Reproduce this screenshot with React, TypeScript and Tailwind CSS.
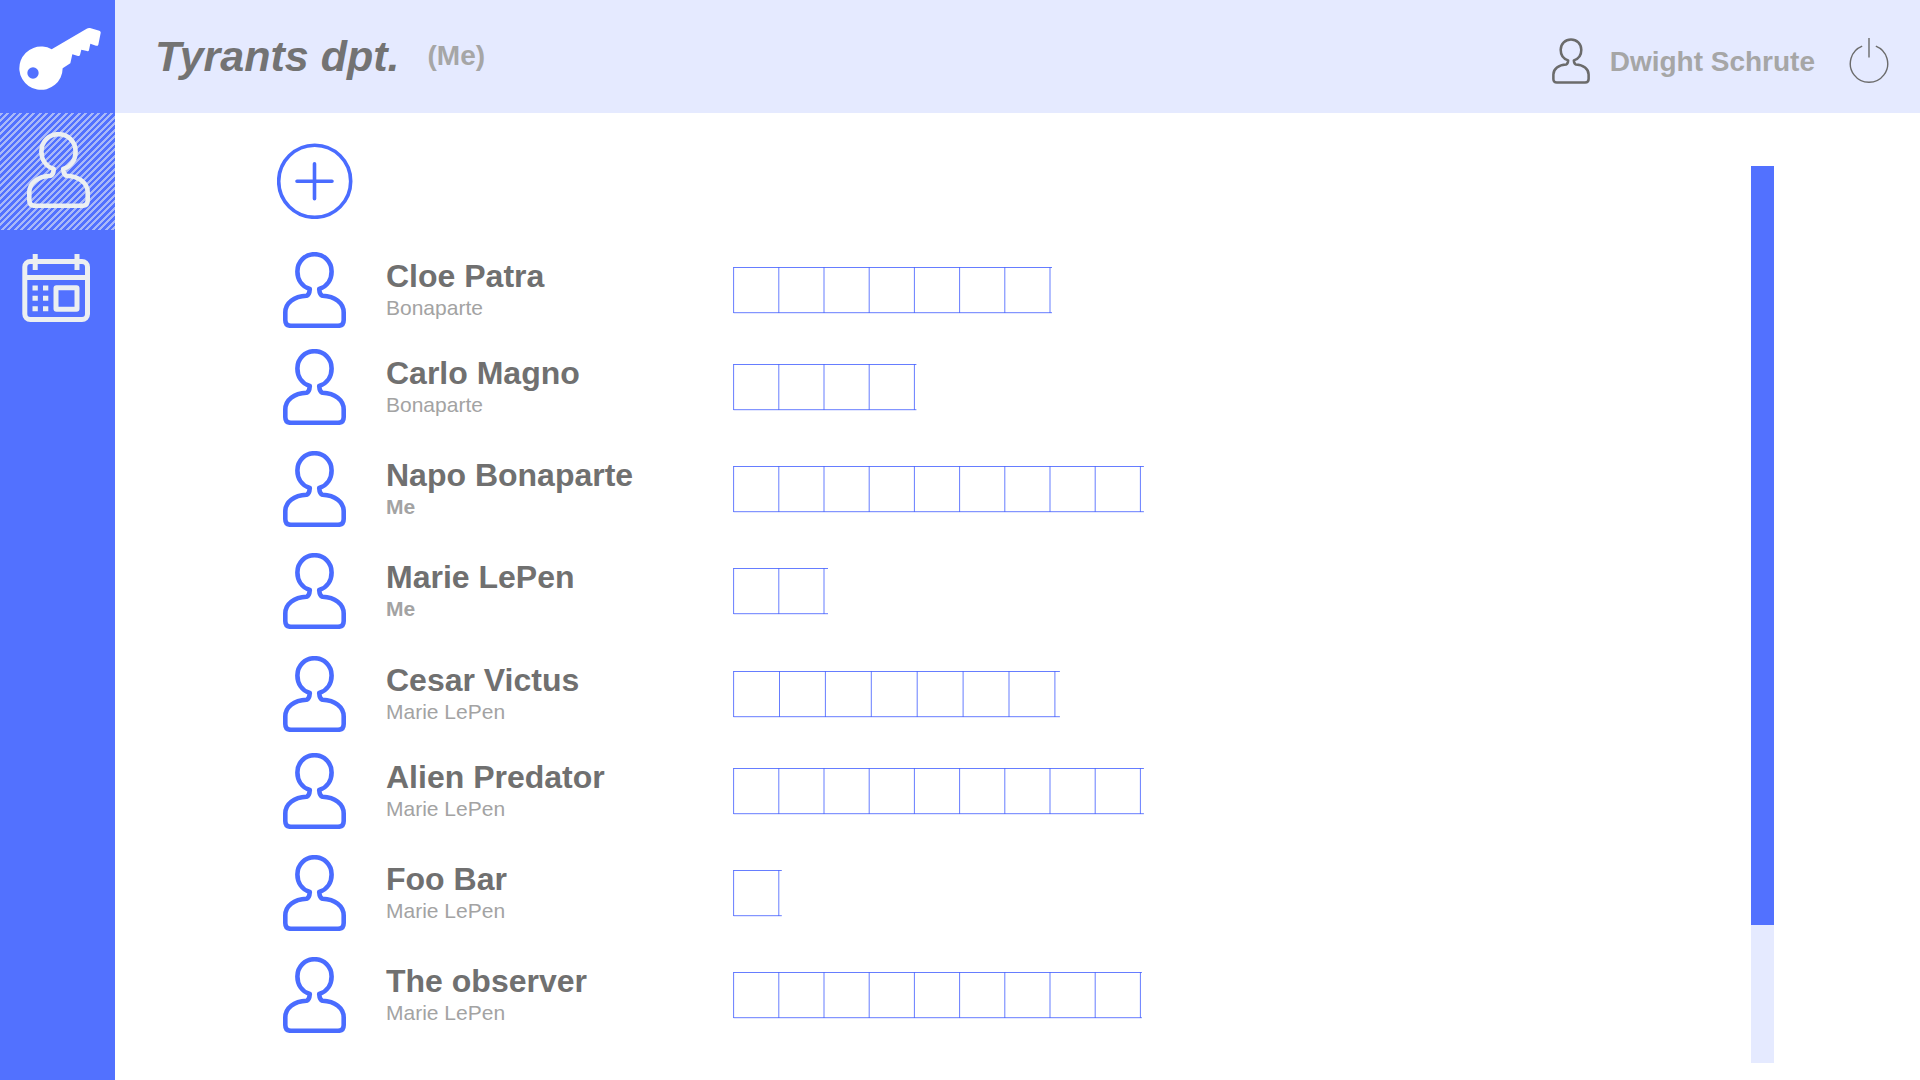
type Person = { name: string; owner: string; cells: number; pitch: number; tail: number; gap: string };

const people: Person[] = [
  { name: 'Cloe Patra', owner: 'Bonaparte', cells: 7, pitch: 45.2, tail: 2, gap: 'mt-[33px]' },
  { name: 'Carlo Magno', owner: 'Bonaparte', cells: 4, pitch: 45.2, tail: 2, gap: 'mt-[21px]' },
  { name: 'Napo Bonaparte', owner: 'Me', cells: 9, pitch: 45.2, tail: 3.5, gap: 'mt-[26px]' },
  { name: 'Marie LePen', owner: 'Me', cells: 2, pitch: 45.2, tail: 4, gap: 'mt-[26px]' },
  { name: 'Cesar Victus', owner: 'Marie LePen', cells: 7, pitch: 45.9, tail: 5, gap: 'mt-[27px]' },
  { name: 'Alien Predator', owner: 'Marie LePen', cells: 9, pitch: 45.2, tail: 3.5, gap: 'mt-[21px]' },
  { name: 'Foo Bar', owner: 'Marie LePen', cells: 1, pitch: 45.2, tail: 3, gap: 'mt-[26px]' },
  { name: 'The observer', owner: 'Marie LePen', cells: 9, pitch: 45.2, tail: 1.5, gap: 'mt-[26px]' },
];

function PersonIcon({ className, stroke = 4.6 }: { className: string; stroke?: number }) {
  return (
    <svg viewBox="0 0 63 76" className={className} fill="none" stroke="currentColor" strokeWidth={stroke} strokeLinejoin="round" aria-hidden="true">
      <path d="M26.8 37C18.8 34.5 14.4 27.5 14.4 19.4C14.4 9.5 22 2.2 31.5 2.2S48.6 9.5 48.6 19.4C48.6 27.5 44.2 34.5 36.2 37C36.4 40 37.3 43 39.5 43.7C52 44.2 60.7 51 60.7 60.5V68Q60.7 73.8 55 73.8H8Q2.3 73.8 2.3 68V60.5C2.3 51 11 44.2 23.5 43.7C25.7 43 26.6 40 26.8 37Z" />
    </svg>
  );
}

function KeyIcon() {
  return (
    <svg viewBox="57 81 249 192" className="h-16 w-[83px]" fill="white" aria-hidden="true">
      <path fillRule="evenodd" d="M155 148L260 86Q265 83 270 84L298 92Q303 94 302 99L295 134Q293 139 288 137L271 131L267 150Q266 155 261 153L244 149L240 165Q239 169 234 168L217 163L211 190L188 205A65 65 0 1 1 155 148ZM99 202A17 17 0 1 0 99 236A17 17 0 1 0 99 202Z" />
    </svg>
  );
}

function CalendarIcon() {
  return (
    <svg viewBox="0 0 68 68" className="size-[68px]" fill="none" stroke="currentColor" strokeWidth="5" aria-hidden="true">
      <rect x="2.8" y="7.5" width="62.7" height="58" rx="5.5" />
      <path d="M3 23.5H65" />
      <path d="M13.2 0V16M55 0V16" />
      <path d="M10.5 34H15.8M21 34H26.3M10.5 44.3H15.8M21 44.3H26.3M10.5 54.8H15.8M21 54.8H26.3" />
      <rect x="34" y="33.7" width="21" height="21.5" rx="0.5" />
    </svg>
  );
}

function PowerIcon() {
  return (
    <svg viewBox="0 0 40 46" className="h-[46px] w-10" fill="none" stroke="currentColor" strokeWidth="1.4" aria-hidden="true">
      <path d="M13.2 8.2A18.7 18.7 0 1 0 26.8 8.2M20 0V19.5" />
    </svg>
  );
}

function CellChart({ cells, pitch, tail }: { cells: number; pitch: number; tail: number }) {
  const end = 0.6 + cells * pitch;
  return (
    <svg width={Math.ceil(end + tail)} height="46" className="shrink-0 overflow-visible text-[#4a66ff]" stroke="currentColor" strokeWidth="0.85" role="img" aria-label={`${cells} cells`}>
      <path d={`M0.6 0.5H${end + tail}M0.6 45.7H${end + tail}`} />
      {Array.from({ length: cells + 1 }, (_, i) => (
        <path key={i} d={`M${0.6 + i * pitch} 0V46`} />
      ))}
    </svg>
  );
}

export default function App() {
  return (
    <div className="flex min-h-screen bg-white font-['Liberation_Sans',Arial,sans-serif]">
      <nav className="flex w-[115px] shrink-0 flex-col bg-[#5271ff] text-[#eceff1]" aria-label="Main">
        <a href="#home" aria-label="Home" className="flex h-[113px] items-center pt-1 pl-[19px]">
          <KeyIcon />
        </a>
        <a href="#people" aria-label="People" aria-current="page" className="flex h-[117px] items-center bg-[repeating-linear-gradient(135deg,#a9b8f8_0%,#a9b8f8_12%,#5271ff_13%,#5271ff_25%)] bg-[length:13px_13px] pb-1 pl-[27px]">
          <PersonIcon className="h-[76px] w-[63px]" />
        </a>
        <a href="#calendar" aria-label="Calendar" className="flex pt-6 pl-[22px]">
          <CalendarIcon />
        </a>
      </nav>
      <div className="flex min-w-0 flex-1 flex-col">
        <header className="flex h-[113px] items-center justify-between bg-[#e5eaff] pr-[31px] pl-10">
          <div className="flex items-center gap-7 pb-0.5">
            <h1 className="text-[43px] leading-[48px] font-bold text-[#737373] italic">Tyrants dpt.</h1>
            <span className="text-[28px] leading-8 font-bold text-[#a6a6a6]">(Me)</span>
          </div>
          <div className="flex items-center pt-2">
            <PersonIcon className="h-[46px] w-[38px] text-[#6b6b6b]" stroke={4.2} />
            <span className="ml-5 pt-0.5 text-[28px] leading-8 font-bold text-[#a6a6a6]">Dwight Schrute</span>
            <button type="button" aria-label="Log out" className="ml-[34px] text-[#6b6b6b]">
              <PowerIcon />
            </button>
          </div>
        </header>
        <main className="flex flex-1 justify-between pr-[146px] pl-[162px]">
          <div className="pt-[30px]">
            <button type="button" aria-label="Add person" className="block text-[#4a6cff]">
              <svg viewBox="0 0 76 76" className="size-[76px]" fill="none" stroke="currentColor" strokeWidth="3.6" strokeLinecap="round" aria-hidden="true">
                <circle cx="37.7" cy="38.3" r="36" />
                <path d="M37.5 20.8V55.8M20 38.3H55" />
              </svg>
            </button>
            <ul id="people">
              {people.map((p) => (
                <li key={p.name} className={`flex h-[76px] items-center pl-1.5 ${p.gap}`}>
                  <PersonIcon className="h-[76px] w-[63px] shrink-0 text-[#4a6cff]" />
                  <div className="ml-10 w-[347px] shrink-0">
                    <h2 className="text-[32px] leading-9 font-bold text-[#707070]">{p.name}</h2>
                    <p className={`text-[21px] leading-7 text-[#a3a3a3] ${p.owner === 'Me' ? 'font-bold' : ''}`}>{p.owner}</p>
                  </div>
                  <CellChart cells={p.cells} pitch={p.pitch} tail={p.tail} />
                </li>
              ))}
            </ul>
          </div>
          <div role="scrollbar" aria-label="People list" aria-orientation="vertical" aria-controls="people" aria-valuenow={0} className="mt-[53px] mb-[17px] flex w-[23px] flex-col bg-[#e5eaff]">
            <div className="h-[759px] bg-[#5271ff]" />
          </div>
        </main>
      </div>
    </div>
  );
}
